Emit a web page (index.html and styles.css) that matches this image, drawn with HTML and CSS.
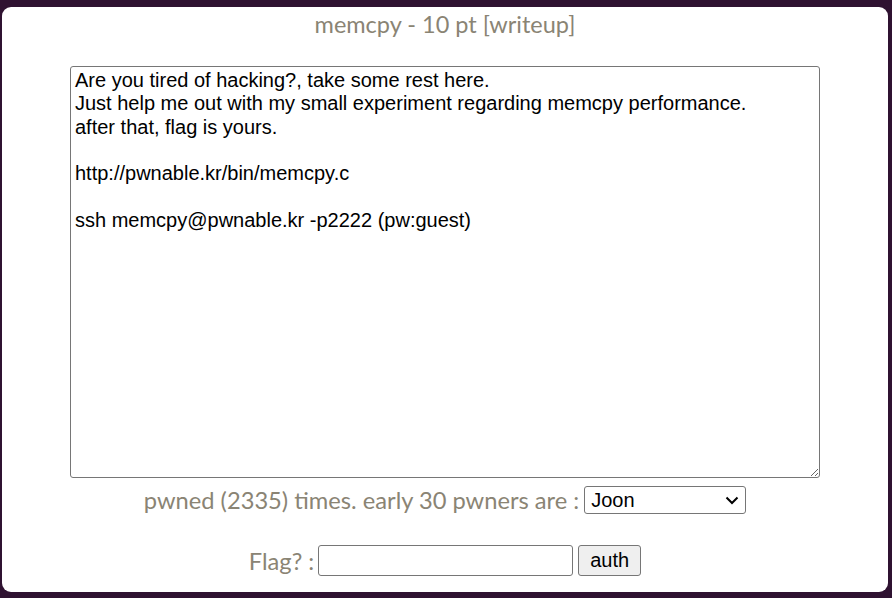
FILE: index.html
```html
<!DOCTYPE html>
<html>
<head>
<meta charset="utf-8">
<link rel="stylesheet" href="styles.css">
</head>
<body>
<div class="card">
  <div class="title">memcpy - 10 pt [writeup]</div>
  <div class="desc-wrap">
    <textarea class="desc">Are you tired of hacking?, take some rest here.
Just help me out with my small experiment regarding memcpy performance.
after that, flag is yours.

http://pwnable.kr/bin/memcpy.c

ssh memcpy@pwnable.kr -p2222 (pw:guest)</textarea>
  </div>
  <div class="pwned">
    <span>pwned (2335) times. early 30 pwners are :</span>
    <span class="select-wrap">
      <select class="pwners"><option>Joon</option></select>
      <svg class="chev" width="14" height="9" viewBox="0 0 14 9"><path d="M1.5 1.5 L7 7 L12.5 1.5" fill="none" stroke="#000" stroke-width="2"/></svg>
    </span>
  </div>
  <form class="flag">
    <span>Flag? :</span>
    <input type="text" class="flag-input">
    <button type="button" class="auth">auth</button>
  </form>
</div>
</body>
</html>
```

FILE: styles.css
```css
html, body {
  margin: 0;
  padding: 0;
  background: #2f1231;
}
body {
  padding: 7px 4px 6px 2px;
  height: 598px;
  box-sizing: border-box;
}
.card {
  background: #fff;
  border-radius: 9px;
  height: 585px;
  font-family: Lato, sans-serif;
  color: #8a8474;
  text-align: center;
}
.title {
  font-size: 23.5px;
  padding-top: 3px;
  line-height: 28px;
}
.desc-wrap {
  margin-top: 28px;
  display: flex;
  justify-content: center;
}
.desc {
  width: 750px;
  height: 412px;
  box-sizing: border-box;
  border: 1px solid #767676;
  border-radius: 3px;
  padding: 2px 4px;
  font-family: "Liberation Sans", Arial, sans-serif;
  font-size: 20px;
  line-height: 23.3px;
  color: #000;
  resize: both;
  margin: 0;
}
.pwned {
  display: flex;
  justify-content: center;
  align-items: center;
  gap: 5px;
  margin-top: 8px;
  font-size: 23.7px;
}
.select-wrap {
  position: relative;
  display: flex;
}
.pwners {
  appearance: none;
  -webkit-appearance: none;
  width: 162px;
  height: 28px;
  font-family: "Liberation Sans", Arial, sans-serif;
  font-size: 20px;
  color: #000;
  border: 1px solid #767676;
  border-radius: 3px;
  background: #fff;
  padding: 0 6px;
  margin: 0;
}
.chev {
  position: absolute;
  right: 7px;
  top: 10px;
  pointer-events: none;
}
.flag {
  display: flex;
  justify-content: center;
  align-items: center;
  gap: 5px;
  margin: 31px 0 0 0;
  font-size: 23.7px;
}
.flag span { margin-right: -1px; }
.flag-input {
  width: 255px;
  height: 31px;
  box-sizing: border-box;
  border: 1px solid #767676;
  border-radius: 3px;
  margin: 0;
}
.auth {
  width: 63px;
  height: 31px;
  font-family: "Liberation Sans", Arial, sans-serif;
  font-size: 20px;
  color: #000;
  background: #efefef;
  border: 1px solid #767676;
  border-radius: 3px;
  margin: 0;
  padding: 0;
}
```
